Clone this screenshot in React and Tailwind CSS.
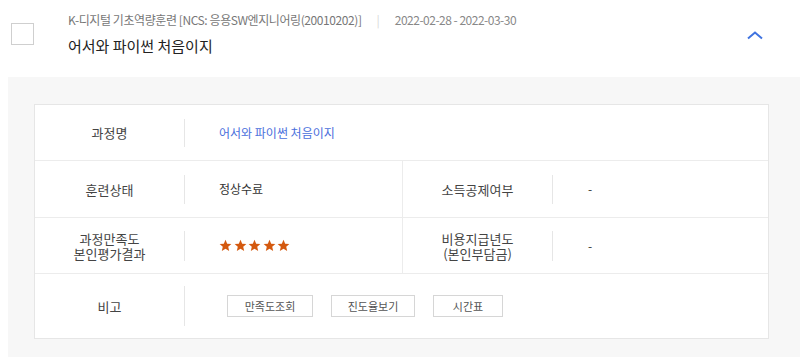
import React from "react";

const font = { fontFamily: "'Noto Sans CJK KR', 'Noto Sans', sans-serif" };

function Star() {
  return (
    <svg width="13" height="13" viewBox="0 0 24 24">
      <path
        d="M12 1.5l3.1 7.1 7.7.7-5.8 5.1 1.8 7.6L12 18l-6.8 4 1.8-7.6L1.2 9.3l7.7-.7z"
        fill="#d4590f"
      />
    </svg>
  );
}

function Label({ h, children }) {
  return (
    <div className="flex items-center">
      <div
        className={`w-full ${h} border-r border-[#e6e6e6] flex items-center justify-center text-center text-[13px] leading-[15px] text-[#444]`}
      >
        {children}
      </div>
    </div>
  );
}

function Btn({ w, children }) {
  return (
    <div
      className={`${w} h-[22px] border border-[#d6d6d6] flex items-center justify-center text-[11px] text-[#555] bg-white`}
    >
      {children}
    </div>
  );
}

export default function App() {
  return (
    <div style={font} className="w-[800px] h-[357px] bg-white overflow-hidden">
      {/* header */}
      <div className="flex items-start h-[77px] pl-[11px]">
        <div className="w-[23px] h-[22px] mt-[23px] border border-[#cfcfcf] bg-white" />
        <div className="ml-[34px] flex flex-col">
          <div className="mt-[12px] h-[16px] flex items-center text-[12px] text-[#777] leading-[16px]">
            <span className="tracking-[-0.42px]">K-디지털 기초역량훈련 [NCS: 응용SW엔지니어링(20010202)]</span>
            <span className="mx-[15px] text-[#d8d8d8]">|</span>
            <span className="text-[#888] tracking-[-0.5px]">2022-02-28 - 2022-03-30</span>
          </div>
          <div className="mt-[7px] text-[15px] leading-[22px] text-[#222]">
            어서와 파이썬 처음이지
          </div>
        </div>
        <div className="ml-auto mr-[37px] mt-[31px]">
          <svg width="16" height="9" viewBox="0 0 16 9">
            <polyline
              points="1,7.5 8,1.5 15,7.5"
              fill="none"
              stroke="#3f73e0"
              strokeWidth="2"
            />
          </svg>
        </div>
      </div>

      {/* gray panel */}
      <div className="ml-[8px] bg-[#f7f7f7] h-[280px] pt-[27px] pl-[26px] pr-[31px]">
        <div className="bg-white border border-[#e6e6e6]">
          {/* row 1 */}
          <div className="grid grid-cols-[150px_1fr] h-[56px] border-b border-[#ececec]">
            <Label h="h-[28px]">과정명</Label>
            <div className="flex items-center pl-[34px] text-[12px] text-[#4a6fdc]">
              어서와 파이썬 처음이지
            </div>
          </div>
          {/* row 2 */}
          <div className="grid grid-cols-[150px_218px_150px_1fr] h-[57px] border-b border-[#ececec]">
            <Label h="h-[29px]">훈련상태</Label>
            <div className="flex items-center pl-[34px] text-[12px] text-[#333] border-r border-[#ececec]">
              정상수료
            </div>
            <Label h="h-[29px]">소득공제여부</Label>
            <div className="flex items-center pl-[35px] text-[12px] text-[#333]">-</div>
          </div>
          {/* row 3 */}
          <div className="grid grid-cols-[150px_218px_150px_1fr] h-[56px] border-b border-[#ececec]">
            <Label h="h-[30px]">
              과정만족도
              <br />
              본인평가결과
            </Label>
            <div className="flex items-center pl-[34px] gap-[1.5px] border-r border-[#ececec]">
              <Star />
              <Star />
              <Star />
              <Star />
              <Star />
            </div>
            <Label h="h-[30px]">
              비용지급년도
              <br />
              (본인부담금)
            </Label>
            <div className="flex items-center pl-[35px] text-[12px] text-[#333]">-</div>
          </div>
          {/* row 4 */}
          <div className="grid grid-cols-[150px_1fr] h-[64px]">
            <Label h="h-[40px]">비고</Label>
            <div className="flex items-center pl-[42px] gap-[18px]">
              <Btn w="w-[86px]">만족도조회</Btn>
              <Btn w="w-[84px]">진도율보기</Btn>
              <Btn w="w-[70px]">시간표</Btn>
            </div>
          </div>
        </div>
      </div>
    </div>
  );
}
